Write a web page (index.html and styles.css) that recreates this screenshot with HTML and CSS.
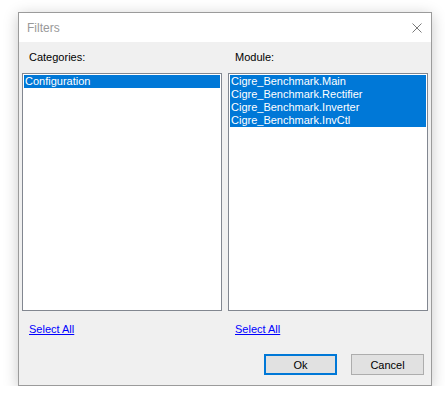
FILE: index.html
```html
<!DOCTYPE html>
<html lang="en">
<head>
  <meta charset="UTF-8">
  <title>Filters</title>
  <link rel="stylesheet" href="styles.css">
</head>
<body>
  <div class="dialog">
    <div class="titlebar">
      <span class="title">Filters</span>
      <button class="close" aria-label="Close">
        <svg width="10" height="10" viewBox="0 0 10 10">
          <path d="M0.5 0.5 L9.5 9.5 M9.5 0.5 L0.5 9.5" stroke="#7a7a7a" stroke-width="1" fill="none"/>
        </svg>
      </button>
    </div>
    <div class="content">
      <div class="columns">
        <div class="column">
          <div class="label">Categories:</div>
          <ul class="listbox">
            <li class="selected">Configuration</li>
          </ul>
          <a href="#" class="select-all">Select All</a>
        </div>
        <div class="column">
          <div class="label">Module:</div>
          <ul class="listbox">
            <li class="selected">Cigre_Benchmark.Main</li>
            <li class="selected">Cigre_Benchmark.Rectifier</li>
            <li class="selected">Cigre_Benchmark.Inverter</li>
            <li class="selected">Cigre_Benchmark.InvCtl</li>
          </ul>
          <a href="#" class="select-all">Select All</a>
        </div>
      </div>
      <div class="buttons">
        <button class="btn btn-default">Ok</button>
        <button class="btn">Cancel</button>
      </div>
    </div>
  </div>
</body>
</html>
```

FILE: styles.css
```css
* {
  box-sizing: border-box;
}
body {
  margin: 0;
  padding: 12px 0 0 18px;
  background: #fff;
  font-family: "Liberation Sans", Arial, sans-serif;
  font-size: 11px;
  color: #000;
}
.dialog {
  width: 414px;
  height: 374px;
  border: 1px solid #9b9b9b;
  background: #f0f0f0;
  box-shadow: 0 3px 14px rgba(0,0,0,0.22);
  display: flex;
  flex-direction: column;
}
.titlebar {
  height: 29px;
  background: #fff;
  display: flex;
  align-items: center;
  justify-content: space-between;
  padding-left: 8px;
}
.title {
  font-size: 12px;
  color: #999;
}
.close {
  border: none;
  background: none;
  padding: 0;
  width: 10px;
  height: 10px;
  margin-right: 9px;
  display: flex;
}
.content {
  flex: 1;
  padding: 0 3px;
}
.columns {
  display: flex;
  gap: 6px;
}
.column {
  width: 200px;
}
.label {
  height: 31px;
  line-height: 13px;
  padding: 9px 0 0 7px;
}
.listbox {
  list-style: none;
  margin: 0;
  padding: 1px;
  height: 238px;
  border: 1px solid #828790;
  background: #fff;
}
.listbox li {
  height: 13px;
  line-height: 13px;
  padding-left: 1px;
  white-space: nowrap;
}
.listbox li.selected {
  background: #0078d7;
  color: #fff;
}
.select-all {
  display: inline-block;
  margin: 12px 0 0 7px;
  line-height: 13px;
  color: #0000ff;
  text-decoration: underline;
}
.buttons {
  display: flex;
  justify-content: flex-end;
  gap: 14px;
  padding: 18px 4px 0 0;
}
.btn {
  width: 73px;
  height: 21px;
  background: #e1e1e1;
  border: 1px solid #adadad;
  font-family: inherit;
  font-size: 11px;
  color: #000;
  padding: 0;
}
.btn-default {
  border: 2px solid #0078d7;
}
```
